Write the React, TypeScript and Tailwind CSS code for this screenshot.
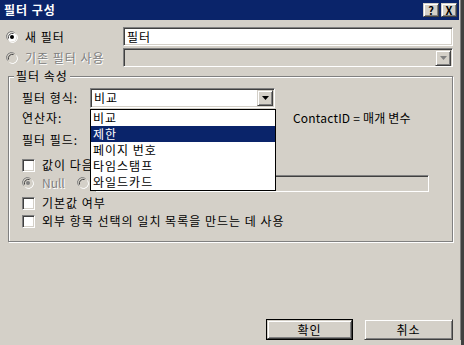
import React from "react";

const sunken =
  "border border-t-[#808080] border-l-[#808080] border-b-white border-r-white shadow-[inset_1px_1px_0_#404040,inset_-1px_-1px_0_#d4d0c8]";
const raised =
  "border border-t-[#d4d0c8] border-l-[#d4d0c8] border-b-[#404040] border-r-[#404040] shadow-[inset_1px_1px_0_#fff,inset_-1px_-1px_0_#808080]";

function Radio({ checked, disabled }: { checked?: boolean; disabled?: boolean }) {
  return (
    <svg width="12" height="12" viewBox="0 0 12 12" className="shrink-0">
      <path d="M1.5 8.5 A5 5 0 0 1 8.5 1.5" fill="none" stroke="#808080" strokeWidth="1" />
      <path d="M10.5 3.5 A5 5 0 0 1 3.5 10.5" fill="none" stroke="#ffffff" strokeWidth="1" />
      <circle cx="6" cy="6" r="4.5" fill={disabled ? "#d4d0c8" : "#ffffff"} />
      <path d="M2.5 7.5 A4 4 0 0 1 7.5 2.5" fill="none" stroke="#404040" strokeWidth="1" />
      {checked && <circle cx="6" cy="6" r="2" fill={disabled ? "#808080" : "#000000"} />}
    </svg>
  );
}

function Check() {
  return <div className={`h-[13px] w-[13px] shrink-0 bg-white ${sunken}`} />;
}

function DropBtn({ disabled }: { disabled?: boolean }) {
  return (
    <div className={`flex h-[16px] w-[16px] items-center justify-center bg-[#d4d0c8] ${raised}`}>
      <svg width="7" height="4" viewBox="0 0 7 4">
        <path d="M0 0 H7 L3.5 4 Z" fill={disabled ? "#808080" : "#000000"} />
      </svg>
    </div>
  );
}

export default function App() {
  const items = ["비교", "제한", "페이지 번호", "타임스탬프", "와일드카드"];
  return (
    <div
      className="flex h-[345px] w-[464px] flex-col overflow-hidden border-r-[3px] border-r-[#404040] bg-[#d4d0c8] text-[12px] leading-[14px] tracking-[1px] text-black"
      style={{ fontFamily: '"Noto Sans CJK KR", "Noto Sans", sans-serif' }}
    >
      <div className="flex border-r border-r-[#808080]">
        <div className="flex flex-1 flex-col border-r border-r-[#d4d0c8]">
          {/* title bar */}
          <div className="flex h-[20px] items-center justify-between bg-[#0a246a] pl-[4px] pr-[2px]">
            <span className="font-bold text-white">필터 구성</span>
            <div className="flex gap-[2px] tracking-normal">
              <div className={`flex h-[14px] w-[16px] items-center justify-center bg-[#d4d0c8] text-[11px] font-bold leading-none ${raised}`}>?</div>
              <div className={`flex h-[14px] w-[16px] items-center justify-center bg-[#d4d0c8] text-[11px] font-bold leading-none ${raised}`}>X</div>
            </div>
          </div>

          <div className="flex flex-col pl-[6px]">
            {/* new filter */}
            <div className="mt-[7px] flex h-[19px] items-center">
              <div className="flex w-[117px] items-center gap-[7px]">
                <Radio checked />
                <span>새 필터</span>
              </div>
              <div className={`flex h-[19px] w-[330px] items-center bg-white pl-[3px] ${sunken}`}>필터</div>
            </div>
            {/* existing filter */}
            <div className="mt-[2px] flex h-[19px] items-center">
              <div className="flex w-[117px] items-center gap-[7px]">
                <Radio disabled />
                <span className="text-[#808080] [text-shadow:1px_1px_0_#fff]">기존 필터 사용</span>
              </div>
              <div className={`flex h-[19px] w-[330px] items-center justify-end bg-[#d4d0c8] pr-[1px] ${sunken}`}>
                <DropBtn disabled />
              </div>
            </div>
          </div>

          {/* group box */}
          <div className="ml-[8px] mt-[9px] flex w-[445px] flex-col border border-[#808080] pb-[11px] shadow-[1px_1px_0_#fff,inset_1px_1px_0_#fff]">
            <span className="-mt-[8px] ml-[5px] w-fit bg-[#d4d0c8] px-[2px]">필터 속성</span>

            <div className="mt-[5px] flex h-[20px] items-center pl-[13px]">
              <span className="w-[68px]">필터 형식:</span>
              <div className="relative">
                <div className={`flex h-[20px] w-[185px] items-center justify-between bg-white pl-[3px] pr-[1px] ${sunken}`}>
                  <span>비교</span>
                  <DropBtn />
                </div>
                <div className="absolute left-0 top-full z-10 mt-[1px] flex w-[186px] flex-col border border-black bg-white">
                  {items.map((it, i) => (
                    <div
                      key={it}
                      className={`flex h-[16px] items-center pl-[2px] ${i === 1 ? "bg-[#0a246a] text-white" : ""}`}
                    >
                      {it}
                    </div>
                  ))}
                </div>
              </div>
            </div>

            <div className="flex h-[19px] items-center pl-[13px]">
              <span className="w-[271px]">연산자:</span>
              <span className="tracking-[0.2px]">ContactID = 매개 변수</span>
            </div>

            <div className="mt-[2px] flex h-[21px] items-center pl-[13px]">
              <span>필터 필드:</span>
            </div>

            <div className="mt-[6px] flex h-[18px] items-center gap-[7px] pl-[13px]">
              <Check />
              <span className="w-[48px] overflow-hidden whitespace-nowrap">값이 다음</span>
            </div>

            <div className="flex h-[18px] items-center pl-[13px]">
              <div className="flex w-[55px] items-center gap-[8px]">
                <Radio checked disabled />
                <span className="tracking-normal text-[#808080] [text-shadow:1px_1px_0_#fff]">Null</span>
              </div>
              <Radio disabled />
              <div className={`ml-[6px] h-[17px] w-[334px] bg-[#d4d0c8] ${sunken}`} />
            </div>

            <div className="mt-[2px] flex h-[18px] items-center gap-[7px] pl-[13px]">
              <Check />
              <span>기본값 여부</span>
            </div>

            <div className="flex h-[18px] items-center gap-[7px] pl-[13px]">
              <Check />
              <span>외부 항목 선택의 일치 목록을 만드는 데 사용</span>
            </div>
          </div>

          {/* buttons */}
          <div className="mt-[77px] flex justify-end gap-[11px] pr-[6px]">
            <div className="border border-black">
              <div className={`flex h-[19px] w-[85px] items-center justify-center bg-[#d4d0c8] ${raised}`}>확인</div>
            </div>
            <div className={`flex h-[21px] w-[89px] items-center justify-center bg-[#d4d0c8] ${raised}`}>취소</div>
          </div>
          <div className="flex-1" />
        </div>
      </div>
    </div>
  );
}
